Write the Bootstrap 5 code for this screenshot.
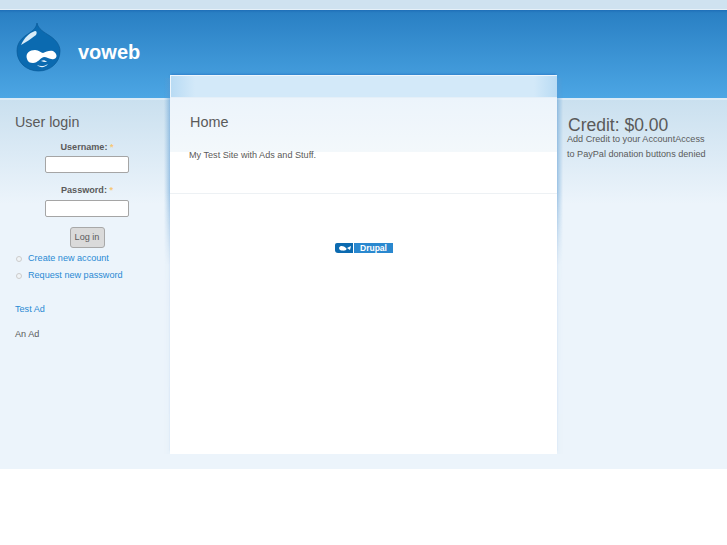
<!DOCTYPE html>
<html lang="en">
<head>
<meta charset="utf-8">
<title>voweb</title>
<link rel="stylesheet" href="https://cdn.jsdelivr.net/npm/bootstrap@5.3.0/dist/css/bootstrap.min.css">
<style>
html,body{height:100%;}
body{background:#fff;font-family:"Liberation Sans",Arial,sans-serif;font-size:9.1px;line-height:15px;color:#5a5a5a;}
.top-strip{height:10px;background:#cfe2f0;border-bottom:1px solid #e6f0f8;}
.site-head{height:88px;background:linear-gradient(#1f6fb8 0,#2a80c4 3px,#4ca6e4 100%);padding:12px 0 0 16px;gap:17px;}
.site-name{font-size:20px;font-weight:700;color:#fff;line-height:1;margin:20px 0 0;}
.page-area{height:371px;background:linear-gradient(#cae0ef 0,#ecf4fb 104px);border-top:2px solid #dcebf6;}
.side-left{width:170px;padding:12px 0 0 15px;}
.side-right{width:170px;padding:16px 0 0 10px;}
.side-title{font-size:14.3px;line-height:20px;font-weight:400;color:#5a5a5a;margin:0 0 9px;}
.form-block{width:144px;margin-bottom:11px;}
.form-block label{display:block;font-weight:700;text-align:center;line-height:12px;margin-bottom:3px;}
.form-block.second{margin-bottom:10px;}
.form-block.second label{margin-bottom:4px;}
.req{color:#f6c878;}
.plain-input{display:block;width:84px;height:17px;margin:0 auto;background:#fff;border:1px solid #a5a5a5;border-radius:2px;}
.submit-btn{display:block;width:35px;height:21px;margin:0 auto;padding:0;font-size:9.1px;line-height:19px;color:#5a5a5a;background:#dadada;border:1px solid #a8a8a8;border-radius:3px;}
.link-list{list-style:none;margin:2px 0 0;padding:0;}
.link-list li{position:relative;padding-left:13px;line-height:17px;}
.link-list li::before{content:"";position:absolute;left:1px;top:6px;width:6px;height:6px;border-radius:50%;border:1px solid #ccc;background:#f0f4f7;}
.blue-link{color:#2a8ad4;text-decoration:none;}
.ad-link{margin:18px 0 0;}
.ad-text{margin:10px 0 0;}
.main-col{position:relative;width:387px;flex:none;margin-top:-25px;height:379px;background:#fff;box-shadow:0 -2px 2px -1px rgba(30,100,190,.5);}
.main-col::before,.main-col::after{content:"";position:absolute;top:3px;width:6px;height:376px;-webkit-mask-image:linear-gradient(#000 0,#000 30%,rgba(0,0,0,.08) 50%,rgba(0,0,0,.05) 100%);mask-image:linear-gradient(#000 0,#000 30%,rgba(0,0,0,.08) 50%,rgba(0,0,0,.05) 100%);}
.main-col::before{left:-6px;background:linear-gradient(to left,rgba(90,155,210,.5),rgba(90,155,210,0));}
.main-col::after{right:-6px;background:linear-gradient(to right,rgba(90,155,210,.5),rgba(90,155,210,0));}
.main-cap{height:23px;border-top:1px solid #eef6fc;border-left:1px solid #eef6fc;border-bottom:1px solid #e4eff8;background:linear-gradient(90deg,#b8dbf4 0,#d3e9f9 24px,#d3e9f9 363px,#b8dbf4 100%);}
.main-band{background:linear-gradient(#ecf4fb,#f3f8fb 54px,#fff 54px);padding:15px 20px 0 19px;height:96px;border-bottom:1px solid #edf1f4;}
.main-title{font-size:14.4px;line-height:19px;font-weight:400;color:#5a5a5a;margin:0 0 16px 1px;}
.badge-row{margin-top:49px;}
.credit{font-size:17.5px;line-height:18px;font-weight:400;color:#5a5a5a;margin:0 0 0 1px;}
.credit-text{line-height:14.5px;margin:-2px 0 0;}
</style>
</head>
<body class="m-0">
<div class="top-strip"></div>
<header class="site-head d-flex align-items-start">
  <svg width="45" height="50" viewBox="0 0 45 50" aria-hidden="true">
    <path d="M21 1C22 7 28 10 34 14C40 18 44 23 44 29C44 41 34 49 22.500 49C10 49 1 40 1 29C1 20 7 15 12 12C16 9 20 7 21 1Z" fill="#0b6ab0" stroke="#0a5a98" stroke-width=".7"/>
    <path d="M19 9C13 11 8 16 5 23C10 20 15 17 20 13C21 11 21 9 19 9Z" fill="#d9ecf8"/>
    <path d="M11 37C9 31 14 28 19 28C23 28 25 31 27 31C30 30 33 28 37 29C41 31 42 36 38 37C34 38 31 35 28 35C24 36 22 41 17 41C14 41 12 40 11 37Z" fill="#fff"/>
    <path d="M21 43C24 46 29 46 32 42C29 44 25 45 21 43Z" fill="#e4f1fa"/>
    <path d="M25 39C27 38 29 38 31 40C29 40 27 40 25 39Z" fill="#e4f1fa"/>
  </svg>
  <h1 class="site-name">voweb</h1>
</header>
<div class="page-area d-flex">
  <aside class="side-left">
    <h2 class="side-title">User login</h2>
    <form>
      <div class="form-block"><label for="u">Username: <span class="req">*</span></label><input id="u" class="plain-input" type="text"></div>
      <div class="form-block second"><label for="p">Password: <span class="req">*</span></label><input id="p" class="plain-input" type="password"></div>
      <div class="form-block mb-0"><button type="button" class="submit-btn">Log in</button></div>
    </form>
    <ul class="link-list">
      <li><a class="blue-link" href="#">Create new account</a></li>
      <li><a class="blue-link" href="#">Request new password</a></li>
    </ul>
    <p class="ad-link"><a class="blue-link" href="#">Test Ad</a></p>
    <p class="ad-text">An Ad</p>
  </aside>
  <main class="main-col">
    <div class="main-cap"></div>
    <div class="main-band">
      <h2 class="main-title">Home</h2>
      <p class="m-0">My Test Site with Ads and Stuff.</p>
    </div>
    <div class="badge-row d-flex justify-content-center">
      <svg width="58" height="10" viewBox="0 0 58 10" aria-hidden="true">
        <path d="M2 0H18V10H3Q0 10 0 7V2Q0 0 2 0Z" fill="#0b6ab0"/>
        <rect x="19" y="0" width="39" height="10" fill="#2a88cf"/>
        <path d="M4 5C5 2 9 3 11 5C13 7 9 8 7 7.500C6 7.500 4 7 4 5Z M12 5L16 3L15 7Z" fill="#fff"/>
        <text x="38.500" y="8" text-anchor="middle" font-family="Liberation Sans, sans-serif" font-size="8.500" font-weight="700" fill="#fff">Drupal</text>
      </svg>
    </div>
  </main>
  <aside class="side-right">
    <h2 class="credit">Credit: $0.00</h2>
    <p class="credit-text">Add Credit to your AccountAccess<br>to PayPal donation buttons denied</p>
  </aside>
</div>
<script src="https://cdn.jsdelivr.net/npm/bootstrap@5.3.0/dist/js/bootstrap.bundle.min.js"></script>
</body>
</html>
